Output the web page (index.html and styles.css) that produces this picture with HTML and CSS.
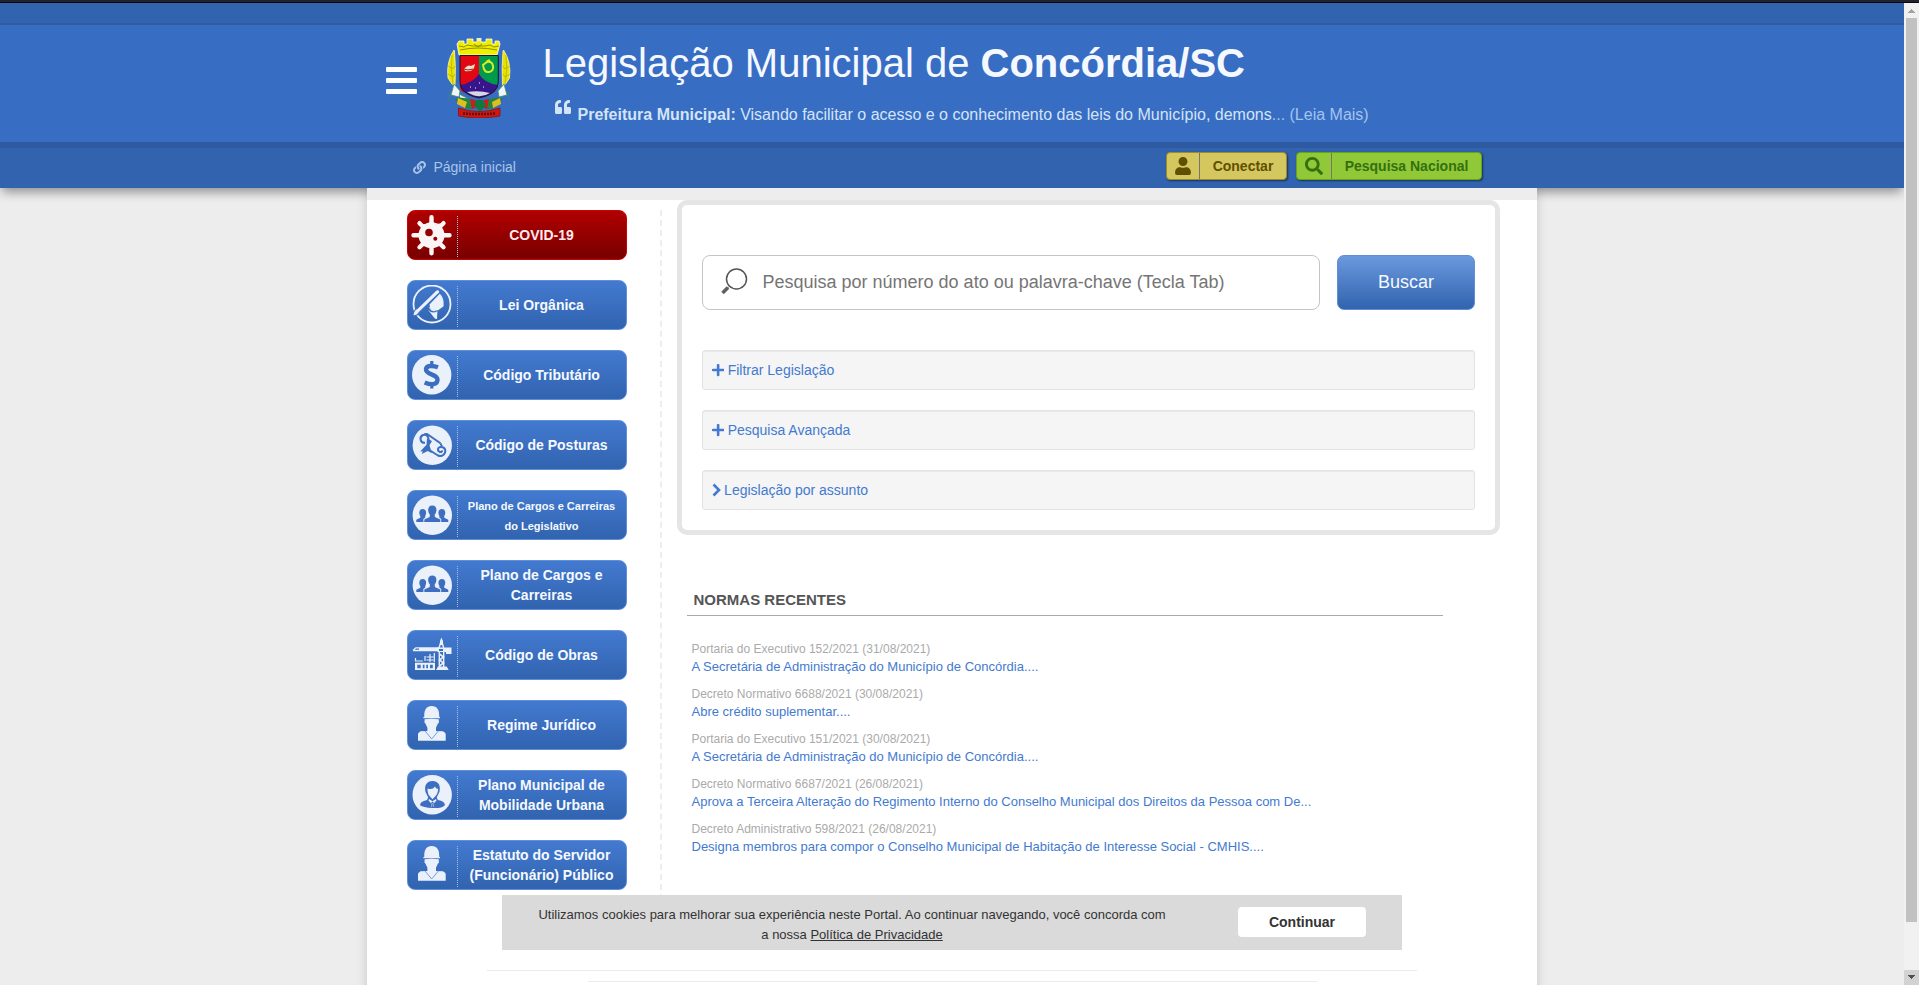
FILE: index.html
```html
<!DOCTYPE html>
<html lang="pt-BR">
<head>
<meta charset="utf-8">
<title>Legislação Municipal de Concórdia/SC</title>
<link rel="stylesheet" href="styles.css">
</head>
<body>
<svg class="symbols" aria-hidden="true">
  <symbol id="plus" viewBox="0 0 448 512"><path d="M416 208H272V64c0-17.67-14.33-32-32-32h-32c-17.67 0-32 14.33-32 32v144H32c-17.67 0-32 14.33-32 32v32c0 17.67 14.33 32 32 32h144v144c0 17.67 14.33 32 32 32h32c17.67 0 32-14.33 32-32V304h144c17.67 0 32-14.33 32-32v-32c0-17.67-14.33-32-32-32z"/></symbol>
  <symbol id="people" viewBox="0 0 42 42">
    <circle class="pale" cx="21.3" cy="20.3" r="19.7"/>
    <path class="ink" d="M13.3 27v-2.6l5.4-2.5.2-2.3c-2.6-3-2.6-9 2.4-9s5 6 2.400 9l.2 2.300 5.400 2.500V27z"/>
    <path class="ink" d="M5.300 27v-2.300l4-2 .1-1.600c-1.700-2.100-1.700-7.100 2.300-7.100 3.900 0 4.100 4.500 2.500 7l.1 1.600-1.900 1.300v3.100zM37.300 27v-2.300l-4-2-.1-1.600c1.700-2.100 1.700-7.100-2.300-7.100-3.900 0-4.100 4.500-2.500 7l-.1 1.600 1.900 1.300v3.100z"/>
  </symbol>
  <symbol id="worker" viewBox="0 0 42 42">
    <path class="pale" d="M12.300 13.300v-1l1-.6C13 4.500 15.500 1 20.700 1s7.900 3.500 7.500 10.700l.8.600v1zM13.600 14.300c4.500-.9 9.500-.9 14.200 0l.1 3.500-1 .6-1.900 4.300v3.300l7 .3 2 1.400.7 1v7H7v-7l.7-1 1.800-1.400 6.900-.3v-3.300l-2-4.300-.9-.6z"/>
    <path d="M14 26l6.700 8 6.700-8" fill="none" stroke="#5b89d0" stroke-width=".8"/>
  </symbol>
</svg>
<div class="window">
  <div class="window-edge"></div>
  <div class="viewport">
    <div class="page">
      <header class="header">
        <div class="strip"></div>
        <div class="banner">
          <svg class="burger" viewBox="0 0 31 27"><rect width="31" height="5" rx="1"/><rect y="11" width="31" height="5" rx="1"/><rect y="22" width="31" height="5" rx="1"/></svg>
          <svg class="crest" viewBox="0 0 66 80">
            <path d="M13 17l-2-11 2-3h5v3h3V1h6v3h4V0h4v4h5V1h6v5h3V3h4l1 3-3 11z" fill="#f0ee00" stroke="#fff" stroke-width=".8"/>
            <path d="M14 12q18-4 37 0M13 8l5 1 3-2 6 1h12l5-1 4 2 5-1M28 6l4 3 4-3" fill="none" stroke="#777700" stroke-width=".8"/>
            <path d="M32 0h3v3h-3z" fill="#e8f4c8"/>
            <path d="M14 17.500h19V41L24 51q-10 8-10-4z" fill="#e30613"/>
            <path d="M33 17.500h19V44q0 8-6 9L33 42z" fill="#009a4e"/>
            <path d="M14 47q13-2 19-11 5 9 19 11-2 10-19 13Q16 57 14 47z" fill="#38158a"/>
            <path d="M21 54q12-2 23 1-11 7-23-1z" fill="#d8d8e5"/>
            <path d="M14 17.500h38.300V44q0 12-19.300 16Q14 56 14 44z" fill="none" stroke="#201818"/>
            <path d="M18 31q4-5 7-3l4-2-1 4q-2 4-9 3z" fill="#eee2c5"/><path d="M18 31l4 1 5-1" stroke="#7a2a18" fill="none"/>
            <path d="M37 27q1 8 6 7t4-6-6-4zM40 24l4-2" fill="none" stroke="#d8ed20" stroke-width="2"/><path d="M24 49h1m4 1h1m3-5h1m3 4h1" stroke="#fff"/>
            <path d="M8 12Q0 24 2 40l4 6 3 1q1-17-.5-34zM57.500 12q8 12 6 28l-4 6-3 1q-1-17 .5-34z" fill="#e6e300" stroke="#fff6a8" stroke-width=".8"/>
            <path d="M6 17q-2 14 1 29M60 17q2 14-1 29M2 28l5 3 2-3M2 36l5 3 2-3M64 28l-5 3-2-3M64 36l-5 3-2-3" stroke="#a8a300" stroke-width=".6" fill="none"/>
            <path d="M8 46l6 7-1 6-8-2zm50 0l-6 7 1 6 8-2zM4 54l-1 9M62 54l1 9M13 56l8 4-5 4" fill="#eef5f4" stroke="#3f8a68" stroke-width=".8"/>
            <path d="M9 61q12-4 22 6l-5 4Q15 71 9 61zM57 61q-12-4-22 6l5 4q11 1 17-10z" fill="#22853a"/>
            <path d="M12 60l9 4-2 6-8-4zM54 60l-8 4 1 6 8-4z" fill="#e0be22"/>
            <path d="M24 61l5 1 2 7-5 2zM43 61l-5 1-2 7 5 2z" fill="#d31a18"/><path d="M30 62h7l3 5-6 7-6-7z" fill="#107940"/>
            <path d="M12.500 70q20 7 41.500 0v8q-21 4-41.500 0z" fill="#d41411" stroke="#801811" stroke-width=".8"/>
            <path d="M17 75.500h2m1 .3h2m1 .2h2m1 0h2m1 0h2m1 0h2m1 0h2m1 0h2m1 0h2m1-.2h2m1-.3h2" stroke="#5c1010" stroke-width="2.500"/>
          </svg>
          <div class="titles">
            <h1>Legislação Municipal de <b>Concórdia/SC</b></h1>
            <p class="intro"><svg class="quote" viewBox="0 0 512 512"><path d="M464 256h-80v-64c0-35.300 28.700-64 64-64h8c13.300 0 24-10.700 24-24V56c0-13.300-10.700-24-24-24h-8c-88.400 0-160 71.600-160 160v240c0 26.500 21.500 48 48 48h128c26.500 0 48-21.500 48-48V304c0-26.500-21.500-48-48-48zm-288 0H96v-64c0-35.300 28.700-64 64-64h8c13.300 0 24-10.700 24-24V56c0-13.300-10.700-24-24-24h-8C71.600 32 0 103.600 0 192v240c0 26.500 21.500 48 48 48h128c26.500 0 48-21.500 48-48V304c0-26.500-21.500-48-48-48z"/></svg><span><b>Prefeitura Municipal:</b> Visando facilitar o acesso e o conhecimento das leis do Município, demons<span class="more">... (Leia Mais)</span></span></p>
          </div>
        </div>
        <nav class="navbar">
          <a class="crumb"><svg viewBox="0 0 512 512"><path d="M326.612 185.391c59.747 59.809 58.927 155.698.36 214.590-.11.120-.24.250-.36.370l-67.200 67.200c-59.270 59.270-155.699 59.262-214.960 0-59.270-59.260-59.270-155.700 0-214.960l37.106-37.106c9.840-9.840 26.786-3.300 27.294 10.606.648 17.722 3.826 35.527 9.690 52.721 1.986 5.822.567 12.262-3.783 16.612l-13.087 13.087c-28.026 28.026-28.905 73.660-1.155 101.960 28.024 28.579 74.086 28.749 102.325.510l67.200-67.190c28.191-28.191 28.073-73.757 0-101.830-3.701-3.694-7.429-6.564-10.341-8.569a16.037 16.037 0 0 1-6.947-12.606c-.396-10.567 3.348-21.456 11.698-29.806l21.054-21.055c5.521-5.521 14.182-6.199 20.584-1.731a152.482 152.482 0 0 1 20.522 17.197zM467.547 44.449c-59.261-59.262-155.690-59.270-214.960 0l-67.200 67.200c-.12.120-.25.250-.36.370-58.566 58.892-59.387 154.781.36 214.590a152.454 152.454 0 0 0 20.521 17.196c6.402 4.468 15.064 3.789 20.584-1.731l21.054-21.055c8.350-8.350 12.094-19.239 11.698-29.806a16.037 16.037 0 0 0-6.947-12.606c-2.912-2.005-6.640-4.875-10.341-8.569-28.073-28.073-28.191-73.639 0-101.830l67.200-67.190c28.239-28.239 74.300-28.069 102.325.510 27.750 28.300 26.872 73.934-1.155 101.960l-13.087 13.087c-4.350 4.350-5.769 10.790-3.783 16.612 5.864 17.194 9.042 34.999 9.690 52.721.509 13.906 17.454 20.446 27.294 10.606l37.106-37.106c59.271-59.259 59.271-155.699.001-214.959z"/></svg>Página inicial</a>
          <div class="actions">
            <a class="action login"><span class="action-icon"><svg viewBox="0 0 448 512"><path d="M224 256c70.700 0 128-57.300 128-128S294.700 0 224 0 96 57.300 96 128s57.300 128 128 128zm89.600 32h-16.700c-22.200 10.200-46.900 16-72.900 16s-50.600-5.800-72.900-16h-16.700C60.200 288 0 348.200 0 422.400V464c0 26.500 21.500 48 48 48h352c26.500 0 48-21.500 48-48v-41.600c0-74.200-60.200-134.400-134.400-134.400z"/></svg></span><span class="action-text">Conectar</span></a>
            <a class="action national"><span class="action-icon"><svg viewBox="0 0 512 512"><path d="M505 442.700L405.300 343c-4.500-4.500-10.600-7-17-7H372c27.600-35.300 44-79.700 44-128C416 93.100 322.900 0 208 0S0 93.100 0 208s93.100 208 208 208c48.300 0 92.700-16.400 128-44v16.300c0 6.400 2.500 12.500 7 17l99.700 99.700c9.400 9.400 24.600 9.400 33.900 0l28.300-28.300c9.400-9.400 9.400-24.600.1-34zM208 336c-70.700 0-128-57.200-128-128 0-70.700 57.200-128 128-128 70.700 0 128 57.200 128 128 0 70.700-57.200 128-128 128z"/></svg></span><span class="action-text">Pesquisa Nacional</span></a>
          </div>
        </nav>
      </header>
      <main class="sheet">
        <div class="columns">
          <aside class="sidebar">
            <a class="tile covid"><svg viewBox="0 0 42 42"><g fill="none" stroke="#fdf4f6" stroke-width="4.400" stroke-linecap="round"><path d="M20.500 2.200v36M2.500 20.200h36M8.500 8.200l24 24M32.500 8.200l-24 24"/></g><path d="M20.500 5l3 4 5.500-.500 2 .5-.5 5.500 1.500 4.500 4 1.200-4 1.200-1.500 4.500.5 5.500-5.500-.7-3.500 1.300-1.500 4-1.500-4-3.500-1.300-5.500.7.500-5.500-1.500-4.500-4-1.200 4-1.200L10.500 14 10 9l7.500 0z" fill="#fdf4f6"/><circle cx="20.500" cy="20.200" r="13" fill="#fdf4f6"/><circle cx="18" cy="17.500" r="3.800" fill="#950000"/><circle cx="24.300" cy="23.800" r="2" fill="#950000"/></svg><span>COVID-19</span></a>
            <a class="tile"><svg viewBox="0 0 42 42"><circle cx="21" cy="19" r="18.500" fill="none" stroke="#eaf1fa" stroke-width="1.800"/><path d="M3.800 28.700L28.200 6" stroke="#3e70c2" stroke-width="6"/><path class="pale" d="M2.500 30.500q.5-5.500 4-6.500L25.500 5.600q2.500-1.200 2.800 1.600L8 26.800q-2 3.400-5.500 3.700z"/><path class="pale" d="M18.500 19.500L28.800 8.800q4.500 4 3.800 12.500l-5.500 4-4.600.8q-2.700-.5-3.400-3zM16.800 24.500q4.200 5 9.600 1.700L26 34q-1.300.5-3-1.500z"/><path d="M18 22q1 4 6 4" fill="none" stroke="#eaf1fa" stroke-width=".7"/></svg><span>Lei Orgânica</span></a>
            <a class="tile"><svg viewBox="0 0 42 42"><circle class="pale" cx="20.700" cy="19.700" r="19.700"/><path d="M27 12.300c-5-2-12-2.200-12 2.200 0 5.400 11.500 4.300 11.500 10.200 0 5.500-7 5.300-12.800 2.700" fill="none" stroke="#3c6ebf" stroke-width="4.400"/><path d="M20.800 6v5M20.800 28v5.500" stroke="#3c6ebf" stroke-width="3.200"/></svg><span>Código Tributário</span></a>
            <a class="tile"><svg viewBox="0 0 42 42"><circle class="pale" cx="21.300" cy="20.300" r="19.700"/><g fill="none" stroke="#3d6ec0" stroke-width="2"><path d="M14 17.800c-5 .3-6-6-2-7.800 4-1.500 6.500 3 5 6M13 9.300l3-.3 13.500 9.300M17.500 24.500l9.500 6c4 2 8.500-2 7-6.300-1.500-3-6.500-3-7 0-.3 3 4 4 4.200 1.200"/><path d="M29.500 18.300l1.400 3"/></g><path class="ink" d="M16 13.500l5 2.600-2.500 4.200 2.300 8-4-2.300-6 3 1-2.700-2.600.2 6.300-6.700z"/></svg><span>Código de Posturas</span></a>
            <a class="tile"><svg><use href="#people"/></svg><span class="small">Plano de Cargos e Carreiras do Legislativo</span></a>
            <a class="tile"><svg><use href="#people"/></svg><span>Plano de Cargos e Carreiras</span></a>
            <a class="tile"><svg viewBox="0 0 42 42"><g fill="none" stroke="#eaf1fa"><path d="M2 15.500l2.800-2.700H28M2 15.500h26M8 14h20" stroke-width="1.300"/><path d="M28 13l2.400-8 2.300 8" stroke-width="1.400"/><path d="M28.300 17v15M32.700 17v15" stroke-width="1.400"/><path d="M28.500 19l4 3-4 3 4 3-4 3" stroke-width="1.600"/><path d="M4 26h8M4.500 23v3M14 21v5M19 19v8M23.300 18v9M15.500 22h7M15.500 25h7" stroke-width="1.200"/></g><path class="pale" d="M26.500 12.500h14V19H35v-2h-8.500zM25 35l2-3.500h8.700l2 3.500zM4 27.700h20V35H4zM29 6l1.400-3L32 6v4h-3z"/><path class="ink" d="M6.300 29.700h3.400v3.500H6.300zM11.800 29.700h1.700v3.500h-1.700zM15.300 29.700H17v3.500h-1.700zM19 29.700h2.800v3.500H19zM28 14h4v2h-4z"/></svg><span>Código de Obras</span></a>
            <a class="tile"><svg><use href="#worker"/></svg><span>Regime Jurídico</span></a>
            <a class="tile"><svg viewBox="0 0 42 42"><circle class="pale" cx="21.200" cy="19.700" r="19.700"/><path class="ink" d="M21.400 6c6.500 0 8.500 5 7 11l-2.700 5.500 1.200 2.500q7.300 1.300 7 5.200Q31 33.500 21.500 33T9 30.200Q9 26.500 16 25l1.200-2.500L14.500 17C13 10 16 6 21.400 6z"/><path class="pale" d="M16.500 13.500q5 1.800 7.500-2 .5 2.400 3.200 2.500-.4 5-2.700 7l-3 3.200-3-3.200q-2-2.200-2-7.500zM18 24l3.500 2.200L25 24l.5 1.500-2.500 2.700-1-1.400h-1l-1 1.400-2.500-2.700z"/><path d="M21 28l-.5 4M22 28l.7 4" stroke="#eaf1fa" stroke-width=".5"/></svg><span>Plano Municipal de Mobilidade Urbana</span></a>
            <a class="tile"><svg><use href="#worker"/></svg><span>Estatuto do Servidor (Funcionário) Público</span></a>
          </aside>
          <div class="content">
            <section class="search-panel">
              <div class="search-row">
                <div class="field"><svg viewBox="0 0 27 27"><circle cx="15.500" cy="11" r="10" fill="none" stroke="#555" stroke-width="1.500"/><path d="M8 18.500l-1.500 1.500" stroke="#666"/><path d="M7 19.500l-5.500 5.500" stroke="#606060" stroke-width="3.500"/></svg>Pesquisa por número do ato ou palavra-chave (Tecla Tab)</div>
                <a class="submit">Buscar</a>
              </div>
              <a class="well"><svg class="plus"><use href="#plus"/></svg>Filtrar Legislação</a>
              <a class="well"><svg class="plus"><use href="#plus"/></svg>Pesquisa Avançada</a>
              <a class="well"><svg class="chevron" viewBox="0 0 9 14"><path d="M1.500 1.500L7 7l-5.500 5.500" fill="none" stroke="#437ad0" stroke-width="2.600"/></svg>Legislação por assunto</a>
            </section>
            <h2>NORMAS RECENTES</h2>
            <ul class="norms">
              <li><small>Portaria do Executivo 152/2021 (31/08/2021)</small><a>A Secretária de Administração do Município de Concórdia....</a></li>
              <li><small>Decreto Normativo 6688/2021 (30/08/2021)</small><a>Abre crédito suplementar....</a></li>
              <li><small>Portaria do Executivo 151/2021 (30/08/2021)</small><a>A Secretária de Administração do Município de Concórdia....</a></li>
              <li><small>Decreto Normativo 6687/2021 (26/08/2021)</small><a>Aprova a Terceira Alteração do Regimento Interno do Conselho Municipal dos Direitos da Pessoa com De...</a></li>
              <li><small>Decreto Administrativo 598/2021 (26/08/2021)</small><a>Designa membros para compor o Conselho Municipal de Habitação de Interesse Social - CMHIS....</a></li>
            </ul>
          </div>
        </div>
        <div class="rule wide"></div>
        <div class="rule narrow"></div>
      </main>
      <div class="cookies">
        <p>Utilizamos cookies para melhorar sua experiência neste Portal. Ao continuar navegando, você concorda com a nossa <u>Política de Privacidade</u></p>
        <a class="accept">Continuar</a>
      </div>
    </div>
    <div class="scrollbar">
      <svg class="arrow" viewBox="0 0 15 15" shape-rendering="crispEdges"><path d="M7 6h1v1h1v1h1v1h1v1H4V9h1V8h1V7h1z" fill="#a3a3a3"/></svg>
      <div class="thumb"></div>
      <svg class="arrow down" viewBox="0 0 15 15" shape-rendering="crispEdges"><path d="M4 5h7v1h-1v1H9v1H8v1H7V8H6V7H5V6H4z" fill="#505050"/></svg>
    </div>
  </div>
</div>
</body>
</html>
```
FILE: styles.css
```css
* { box-sizing: border-box; }
body { margin: 0; overflow: hidden; font: 14px/20px "Liberation Sans", Arial, sans-serif; color: #333; }
h1, h2, p, ul { margin: 0; padding: 0; }
svg { display: block; flex: none; }
.symbols { display: none; }
.pale { fill: #eaf1fa; }
.ink { fill: #3d6ec0; }

.window { display: flex; flex-direction: column; height: 985px; }
.window-edge { flex: none; height: 3px; background: #22222e; border-bottom: 1px solid #08080c; }
.viewport { display: flex; flex: 1; min-height: 0; }
.page { position: relative; flex: 1; min-width: 0; overflow: hidden; background: #ededed; }

.header { position: relative; z-index: 1; background: #3163af; box-shadow: 0 6px 10px -2px rgba(0, 0, 0, .4); }
.strip { height: 22px; border-bottom: 2px solid #2e5ca3; }
.banner { display: flex; height: 117px; padding-left: 386.4px; background: #386dc4; }
.burger { width: 31px; height: 27px; margin-top: 42px; fill: #fff; }
.crest { width: 66px; height: 80px; margin: 13px 0 0 28.6px; }
.titles { margin-left: 30.5px; padding-top: 15px; color: #f5f9ff; white-space: nowrap; }
.titles h1 { font-size: 40px; line-height: 46px; font-weight: 400; }
.intro { display: flex; margin: 19px 0 0 13px; font-size: 16px; color: #d4e4f7; }
.intro > span { margin-left: 6px; }
.quote { width: 16px; height: 16px; margin-top: -6px; fill: #d4e4f7; }
.more { color: #a3c4ed; }
.navbar { display: flex; justify-content: space-between; height: 46px; padding: 4px 422px 0 413.4px; border-top: 6px solid #2e5aa1; }
.crumb { display: flex; gap: 7px; padding-top: 5px; color: #a9c5eb; }
.crumb svg { width: 13px; height: 13px; margin-top: 4px; fill: #a9c5eb; }
.actions { display: flex; gap: 9px; }
.action { display: flex; height: 28px; border: 1px solid; border-radius: 4px; font-weight: 700; line-height: 26px; box-shadow: 1px 1px 2px rgba(0, 0, 0, .5); }
.action-icon { display: flex; align-items: center; justify-content: center; width: 34px; border-right: 1px solid #77766a; }
.action-text { flex: 1; text-align: center; }
.login { width: 121px; color: #5f5000; background: #d5c75f; border-color: #9c8b2d; }
.login .action-icon { width: 33px; }
.login svg { width: 16px; height: 18px; fill: #5f5000; }
.national { width: 186px; color: #35700f; background: #90c838; border-color: #68a516; }
.national .action-icon { width: 35px; }
.national svg { width: 18px; height: 18px; fill: #35700f; }

.sheet { position: relative; z-index: 2; width: 1170px; height: 900px; margin: 0 auto; background: #fff; border-top: 12px solid #ededed; box-shadow: 0 0 10px rgba(0, 0, 0, .16); clip-path: inset(0 -16px -16px); }
.columns { display: flex; align-items: flex-start; height: 770px; }
.sidebar { display: flex; flex-direction: column; gap: 20px; width: 295px; margin-top: 10px; padding: 0 0 10px 40px; border-right: 2px dashed #ededed; }
.tile { display: flex; align-items: center; flex: none; width: 220px; height: 50px; border: 1px solid #5e90da; border-radius: 8px; background: linear-gradient(#437ad0, #3163af); color: #f5f9ff; font-weight: 700; }
.tile svg { width: 42px; height: 42px; margin: 2px 0 0 3px; }
.tile span { display: flex; align-items: center; justify-content: center; flex: 1; height: 41px; margin: 2px 0 0 4px; padding: 0 5px 2px 4px; border-left: 1px dotted #a5c3ee; text-align: center; }
.tile .small { padding: 0 9px 0 8px; font-size: 11px; }
.covid { background: linear-gradient(#b00000, #780000); border-color: #ce0000; color: #ffe9ed; }
.content { margin-left: 15px; }
.search-panel { width: 823px; height: 335px; padding: 50px 20px 0; border: 5px solid #e5e5e5; border-radius: 10px; }
.search-row { display: flex; gap: 17px; margin-bottom: 40px; }
.field { display: flex; align-items: center; width: 618px; height: 55px; padding: 0 0 2px 17.500px; border: 1px solid #c4c4c4; border-radius: 8px; font-size: 18px; color: #757575; }
.field svg { width: 27px; height: 27px; margin-right: 15px; }
.submit { flex: 1; border: 1px solid #5e8fd8; border-radius: 7px; background: linear-gradient(#6b99dd, #3163af); color: #f5f9ff; font-size: 18px; line-height: 53px; text-align: center; }
.well { display: flex; align-items: center; height: 40px; margin-bottom: 20px; padding-left: 8.500px; border: 1px solid #e3e3e3; border-radius: 3px; background: #f5f5f5; box-shadow: inset 0 1px 1px rgba(0, 0, 0, .05); color: #437ad0; }
.plus { width: 12.250px; height: 14px; margin-right: 3.900px; fill: #437ad0; }
.chevron { width: 9px; height: 14px; margin-right: 3.600px; }
.content h2 { width: 756px; margin: 53px 0 0 10px; padding: 2px 6.500px 5px; border-bottom: 1px solid #a9a9a9; font-size: 15px; line-height: 20px; color: #555; }
.norms { margin: 24px 0 0 14.500px; list-style: none; line-height: 18px; white-space: nowrap; }
.norms li { height: 45px; }
.norms small { display: block; font-size: 12px; color: #aaa; }
.norms a { display: block; font-size: 13px; color: #437ad0; }
.rule { height: 1px; margin: 0 auto; background: #ebebeb; }
.wide { width: 930px; }
.narrow { width: 729px; margin-top: 10px; }

/* Consent bar pinned over the page */
.cookies { position: absolute; z-index: 3; left: 502px; bottom: 35px; display: flex; width: 900px; height: 55px; padding: 10px 36px 0 31px; background: #dadada; }
.cookies p { width: 638px; font-size: 13px; text-align: center; }
.accept { width: 128px; height: 30px; margin: 2px 0 0 auto; border-radius: 4px; background: #fff; font-weight: 700; line-height: 30px; text-align: center; }

.scrollbar { display: flex; flex-direction: column; flex: none; width: 15px; background: #f1f1f1; }
.arrow { width: 15px; height: 15px; }
.thumb { width: 11px; height: 904px; margin: 0 2px; background: #c1c1c1; }
.down { margin-top: auto; background: #d2d2d2; }
```
